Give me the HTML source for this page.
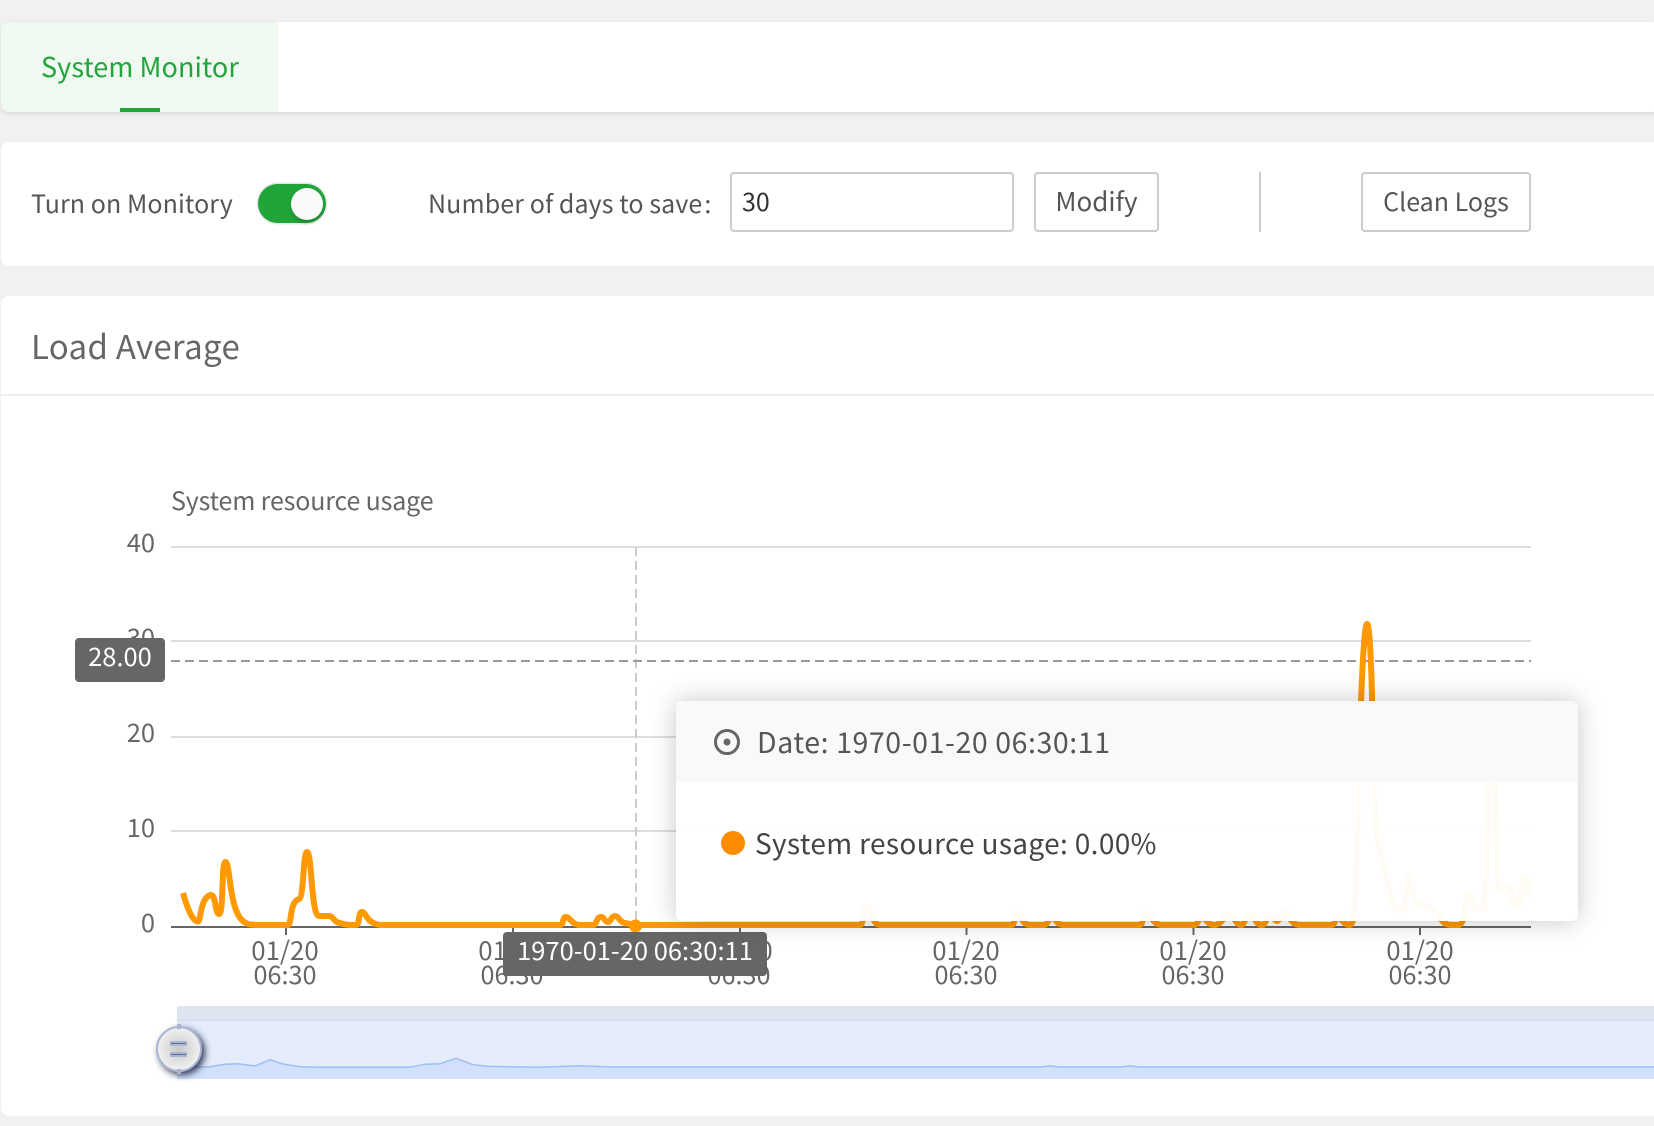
<!DOCTYPE html>
<html lang="en"><head><meta charset="utf-8"><title>System Monitor</title>
<style>
html,body{margin:0;padding:0;background:#f1f1f1;width:1654px;height:1126px;overflow:hidden}
body{position:relative;font-family:"Noto Sans CJK SC","Liberation Sans",sans-serif;color:#555}
.a{position:absolute;white-space:nowrap}
.card{position:absolute;left:1px;width:1660px;background:#fff;border-radius:8px}
.btn{position:absolute;top:172px;height:56px;border:2px solid #ccc;border-radius:4px;background:#fff;text-align:center;line-height:54px;font-size:25px;color:#555}
svg text{font-family:"Noto Sans CJK SC","Liberation Sans",sans-serif}
</style></head><body>
<div class="card" style="top:22px;height:90px;box-shadow:0 2px 6px rgba(0,0,0,.1)"></div>
<div class="a" style="left:1px;top:22px;width:277px;height:90px;background:#eff8f1;border-radius:8px 0 0 8px"></div>
<div class="a" style="left:41px;top:46px;font-size:27px;letter-spacing:.08px;line-height:40px;color:#20a53a">System Monitor</div>
<div class="a" style="left:120px;top:108px;width:40px;height:4px;background:#20a53a"></div>

<div class="card" style="top:142px;height:124px"></div>
<div class="a" style="left:31px;top:183px;font-size:25px;letter-spacing:.08px;line-height:40px">Turn on Monitory</div>
<div class="a" style="left:258px;top:184px;width:68px;height:39px;border-radius:20px;background:#20a53a;box-shadow:0 0 0 1.5px #e6e6e6"></div>
<div class="a" style="left:291px;top:188px;width:32px;height:32px;border-radius:50%;background:#fafafa;box-shadow:0 3px 3px rgba(0,0,0,.18)"></div>
<div class="a" style="left:428px;top:183px;font-size:25px;letter-spacing:.1px;line-height:40px">Number of days to save<span style="margin-left:2px">:</span></div>
<div class="a" style="left:730px;top:172px;width:280px;height:56px;border:2px solid #ccc;border-radius:4px;background:#fff;font-size:25px;line-height:54px;color:#333;text-indent:10px">30</div>
<div class="btn" style="left:1034px;width:121px;font-size:26px">Modify</div>
<div class="a" style="left:1259px;top:172px;width:2px;height:60px;background:#ccc"></div>
<div class="btn" style="left:1361px;width:166px">Clean Logs</div>

<div class="card" style="top:296px;height:820px"></div>
<div class="a" style="left:1px;top:394px;width:1660px;height:2px;background:#eee"></div>
<div class="a" style="left:31px;top:322px;font-size:33px;letter-spacing:.3px;line-height:46px;color:#666">Load Average</div>

<svg class="a" style="left:0;top:0" width="1654" height="1126" viewBox="0 0 1654 1126" xmlns="http://www.w3.org/2000/svg">
<text x="171" y="510" font-size="25" letter-spacing="-.15" fill="#666">System resource usage</text>
<g stroke="#ddd" stroke-width="2" fill="none">
<path d="M171 547H1531M171 641H1531M171 737H1531M171 831H1531"/>
</g>
<g font-size="25.500" fill="#666" text-anchor="end">
<text x="155" y="552">40</text><text x="155" y="647">30</text><text x="155" y="742">20</text><text x="155" y="837">10</text><text x="155" y="932">0</text>
</g>
<path d="M171 927H1531" stroke="#666" stroke-width="2"/>
<path d="M286 927v8M513 927v8M740 927v8M966.5 927v8M1193.5 927v8M1420 927v8" stroke="#666" stroke-width="2"/>
<g fill="#666" text-anchor="middle">
<g font-size="25.800">
<text x="285" y="960">01/20</text><text x="512" y="960">01/20</text><text x="739" y="960">01/20</text><text x="966" y="960">01/20</text><text x="1193" y="960">01/20</text><text x="1420" y="960">01/20</text>
</g>
<g font-size="25.200">
<text x="285" y="984">06:30</text><text x="512" y="984">06:30</text><text x="739" y="984">06:30</text><text x="966" y="984">06:30</text><text x="1193" y="984">06:30</text><text x="1420" y="984">06:30</text>
</g>
</g>
<path d="M636 547V926" stroke="#ccc" stroke-width="2" stroke-dasharray="9 5"/>
<path d="M171 661H1531" stroke="#999" stroke-width="2" stroke-dasharray="9 5"/>
<path fill="none" stroke="#ff9900" stroke-width="6" stroke-linejoin="round" d="M183 893C187 907 192 921 198 921.5C201 921.5 200 897 211 895C216 895 215 914 219 914C224 914 221 862 225.5 862C230 862 229 905 241 919C245 924 250 925 258 925L288 925C292 925 289 902 299 899C304 897 303 852 307 852C312 852 311 916 319 916L329 916C334 916 333 922 340 923C346 925 350 925 356 925C360 925 358 912 362 912C366 912 366 921 376 924L380 925L560 925C564 925 562 917 566 917C570 917 572 925 580 925L593 925C597 925 596 917 601 917C605 917 604 922 608 922C611 922 611 916 615 916C619 916 619 922 625 923L635 925L860 925C864 925 863 907 867 907C871 907 872 925 880 925L1012 925C1015 925 1014 914 1017 914C1021 914 1022 925 1030 925L1044 925C1048 925 1048 918 1052 918C1056 918 1056 925 1064 925L1140 925C1143 925 1143 913 1147 913C1151 913 1152 925 1162 925L1194 925C1198 925 1198 918 1202 918C1206 918 1208 925 1214 925C1222 925 1224 915 1229 915C1234 915 1236 925 1241 925C1245 925 1245 915 1250 915C1255 915 1255 925 1262 925C1266 925 1266 916 1271 916C1274 916 1274 921 1277 921C1280 921 1280 913 1284 913C1289 913 1290 925 1300 925L1332 925C1335 925 1335 918 1338 918C1342 918 1343 925 1350 925C1354 925 1355 905 1356 890C1358 790 1362 624 1367 624C1372 624 1373 760 1374 790C1375 825 1378 850 1385 870C1390 885 1390 910 1397 910L1403 910C1407 910 1404 878 1408 878C1412 878 1411 898 1416 902C1424 906 1431 906 1436 912C1441 918 1442 925 1452 925L1458 925C1467 925 1463 895 1470 895C1474 895 1472 908 1478 908L1483 908C1488 908 1486 720 1491 720C1496 720 1494 884 1500 888C1504 890 1505 886 1509 888C1513 890 1512 905 1517 905C1522 905 1520 878 1525 878C1530 878 1528 892 1531 895"/>
<circle cx="635.500" cy="926" r="6.500" fill="#ff9900"/>

<rect x="177" y="1006" width="1480" height="73" fill="#e5ecfc"/>
<path d="M177 1021V1010a4 4 0 0 1 4-4H1660V1021Z" fill="#dfe4f1"/>
<path d="M177 1020.500H1660" stroke="#d5dcee" stroke-width="1.500"/>
<path d="M177 1067L193 1066.700L208 1067L225 1064.300L238 1063.700L255 1066L270 1059.700L283 1064L300 1066.700L317 1067.300L410 1067.300L425 1064.300L440 1063.700L456 1058.300L473 1064.700L487 1066.300L540 1067.300L580 1065.700L612 1067L1040 1067L1050 1066L1060 1067L1120 1067L1130 1066L1140 1067L1660 1067V1079H177Z" fill="#d2e0fb"/>
<path fill="none" stroke="#a0bef5" stroke-width="1.500" d="M177 1067L193 1066.700L208 1067L225 1064.300L238 1063.700L255 1066L270 1059.700L283 1064L300 1066.700L317 1067.300L410 1067.300L425 1064.300L440 1063.700L456 1058.300L473 1064.700L487 1066.300L540 1067.300L580 1065.700L612 1067L1040 1067L1050 1066L1060 1067L1120 1067L1130 1066L1140 1067L1660 1067"/>
<defs><filter id="hs" x="-40%" y="-40%" width="180%" height="180%"><feDropShadow dx="3" dy="3" stdDeviation="3.500" flood-color="#1c2647" flood-opacity=".9"/></filter>
<radialGradient id="hg"><stop offset="0" stop-color="#c9c9c9"/><stop offset=".5" stop-color="#dedede"/><stop offset="1" stop-color="#f1f1f1"/></radialGradient></defs>
<circle cx="179" cy="1049" r="22" fill="url(#hg)" stroke="#a9b5d3" stroke-width="2" filter="url(#hs)"/>
<path d="M177 1024h4v5h-4zM177 1069h4v5h-4z" fill="#a8b4d4"/>
<rect x="170" y="1041" width="17" height="5" fill="#aab6d8"/><rect x="170" y="1052" width="17" height="5" fill="#aab6d8"/>
<path d="M171 1043.500H186M171 1054.500H186" stroke="#626d8c" stroke-width="1"/>
</svg>

<div class="a" style="left:75px;top:638px;width:90px;height:44px;background:#666;border-radius:4px;color:#fff;text-align:center;font-size:25.5px;line-height:36px">28.00</div>
<div class="a" style="left:503px;top:932px;width:264px;height:44px;background:#666;border-radius:4px;color:#fff;text-align:center;font-size:25.5px;line-height:36px">1970-01-20 06:30:11</div>

<div class="a" style="left:676px;top:701px;width:902px;height:220px;border-radius:6px;background:rgba(255,255,255,.96);box-shadow:0 0 26px rgba(0,0,0,.22);overflow:hidden">
<div style="height:81px;background:#f9f9f9"></div>
</div>
<svg class="a" style="left:713px;top:728px" width="28" height="28" viewBox="0 0 28 28"><circle cx="14" cy="14" r="11.500" fill="none" stroke="#666" stroke-width="3"/><circle cx="14" cy="14" r="3.500" fill="#666"/></svg>
<div class="a" style="left:757px;top:722px;font-size:28.5px;letter-spacing:.58px;line-height:40px;color:#555">Date: 1970-01-20 06:30:11</div>
<div class="a" style="left:721px;top:831px;width:24px;height:24px;border-radius:50%;background:#ff8c00"></div>
<div class="a" style="left:755px;top:823px;font-size:28px;letter-spacing:.36px;line-height:40px;color:#444">System resource usage: 0.00%</div>
</body></html>
